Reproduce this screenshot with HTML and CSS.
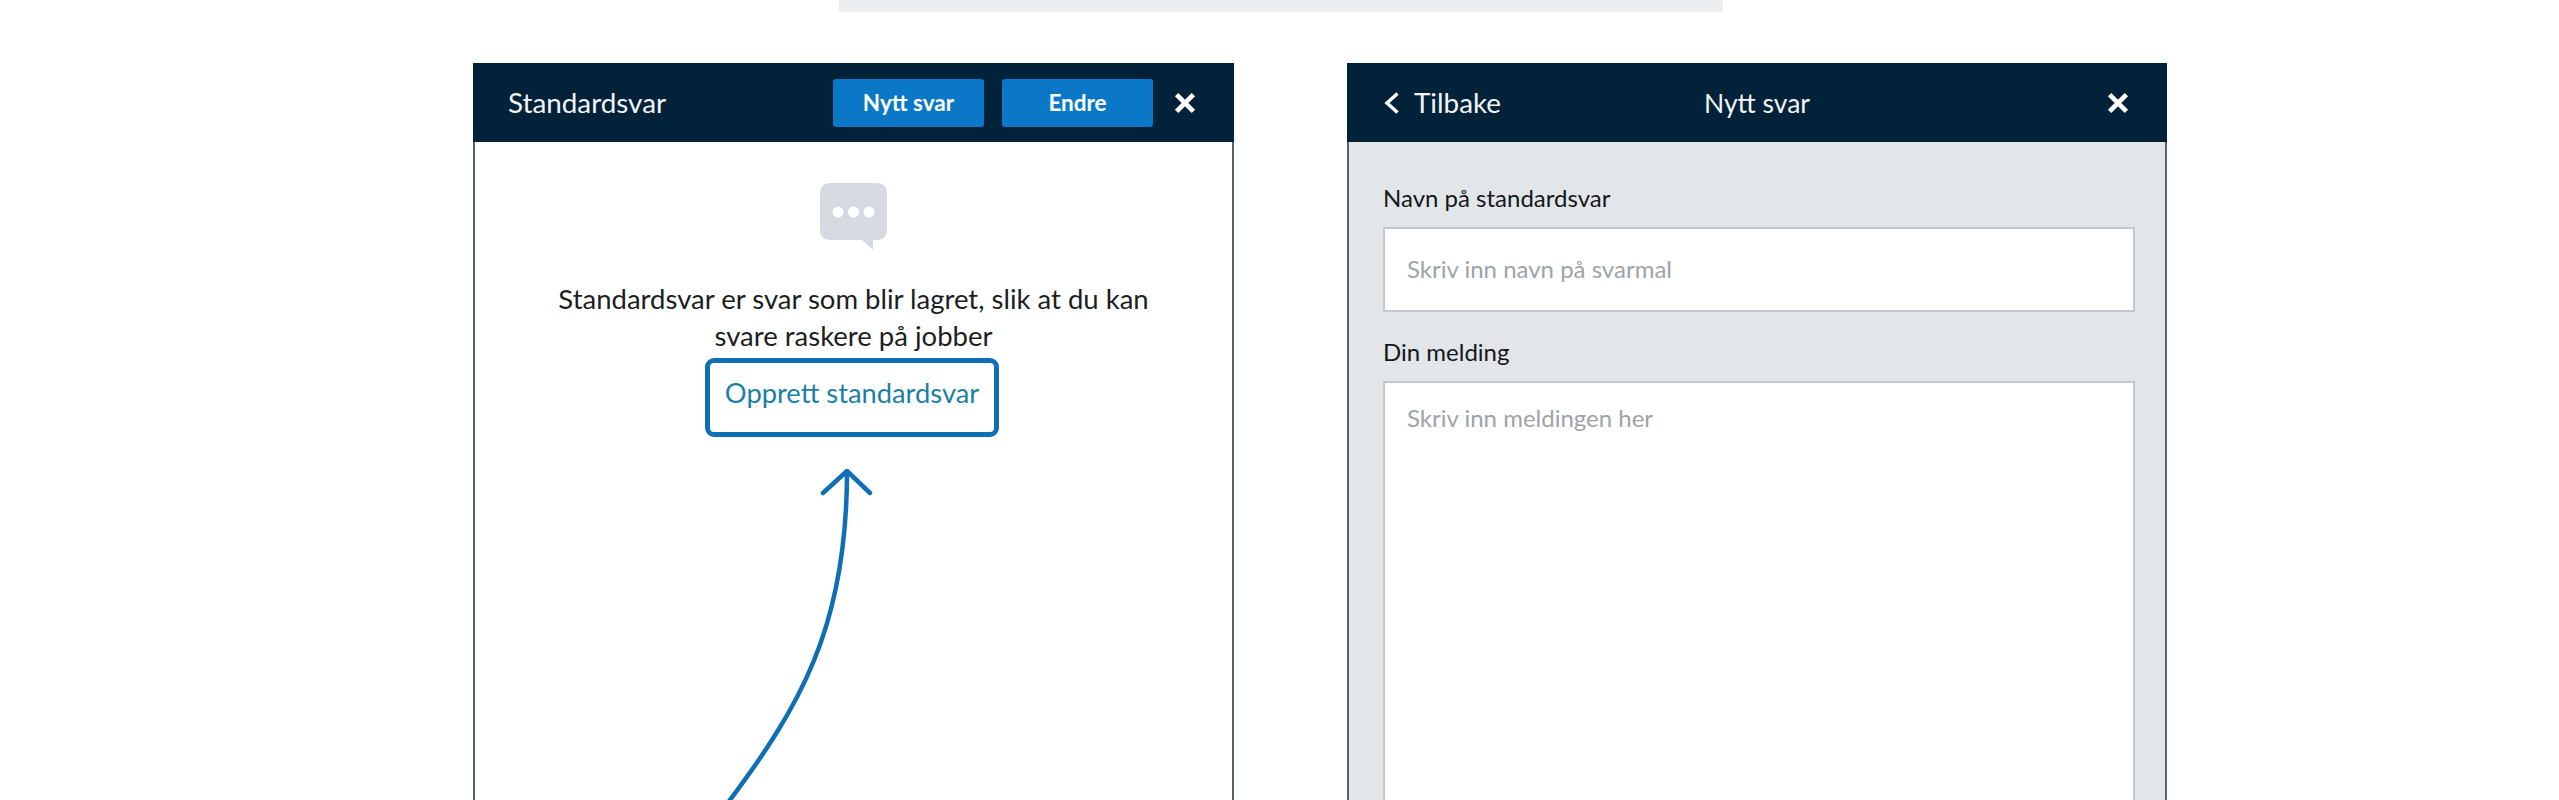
FILE: index.html
```html
<!DOCTYPE html>
<html lang="en">
<head>
  <meta charset="UTF-8" />
  <meta name="viewport" content="width=device-width, initial-scale=1.0"/>
  <title>Standardsvar</title>
  <link rel="stylesheet" href="styles.css">
</head>
<body>

  <div class="top-strip"></div>

  <div class="panels">

    <section class="panel panel-list">
      <header class="panel-header">
        <span class="header-title">Standardsvar</span>
        <div class="header-actions">
          <button class="header-button">Nytt svar</button>
          <button class="header-button">Endre</button>
          <svg class="close-icon" viewBox="0 0 20 20" aria-label="Lukk">
            <path d="M3 3 L17 17 M17 3 L3 17"/>
          </svg>
        </div>
      </header>

      <div class="panel-body empty-state">
        <svg class="bubble-icon" viewBox="0 0 67 67">
          <path class="bubble-shape" d="M11 0 H56 Q67 0 67 11 V46 Q67 57 56 57 H53 V67 L42 57 H11 Q0 57 0 46 V11 Q0 0 11 0 Z"/>
          <circle class="bubble-dot" cx="18" cy="29" r="5.5"/>
          <circle class="bubble-dot" cx="33.5" cy="29" r="5.5"/>
          <circle class="bubble-dot" cx="49" cy="29" r="5.5"/>
        </svg>
        <p class="empty-text">Standardsvar er svar som blir lagret, slik at du kan<br>svare raskere på jobber</p>
        <button class="create-button">Opprett standardsvar</button>
        <svg class="hint-arrow" viewBox="0 0 160 340">
          <path d="M2 336 C74 240 122 160 122 4 M98 25 L122 3 L145 25"/>
        </svg>
      </div>
    </section>

    <section class="panel panel-form">
      <header class="panel-header form-header">
        <div class="back-link">
          <svg class="back-icon" viewBox="0 0 15 22">
            <path d="M13.5 1.5 L3 11 L13.5 20.5"/>
          </svg>
          <span class="header-title">Tilbake</span>
        </div>
        <span class="header-title form-title">Nytt svar</span>
        <svg class="close-icon" viewBox="0 0 20 20" aria-label="Lukk">
          <path d="M3 3 L17 17 M17 3 L3 17"/>
        </svg>
      </header>

      <div class="panel-body form-body">
        <label class="field-label" for="reply-name">Navn på standardsvar</label>
        <input class="field-input" id="reply-name" type="text" placeholder="Skriv inn navn på svarmal">
        <label class="field-label" for="reply-message">Din melding</label>
        <textarea class="field-input field-message" id="reply-message" placeholder="Skriv inn meldingen her"></textarea>
      </div>
    </section>

  </div>

</body>
</html>
```

FILE: styles.css
```css
html, body {
  height: 800px;
  overflow: hidden;
}

body {
  margin: 0;
  background-color: #fff;
  font-family: Lato, "Open Sans", sans-serif;
  color: #1c1f22;
}

.top-strip {
  width: 884px;
  height: 12px;
  margin-left: 839px;
  background-color: #eceff1;
}

.panels {
  display: flex;
  align-items: flex-start;
  gap: 113px;
  margin-top: 51px;
  margin-left: 473px;
}

.panel {
  box-sizing: border-box;
  height: 737px;
  display: flex;
  flex-direction: column;
  border: 2px solid #56646f;
  border-top: none;
  border-bottom: none;
}

.panel-list {
  width: 761px;
}

.panel-form {
  width: 820px;
}

.panel-header {
  flex: none;
  height: 79px;
  margin: 0 -2px;
  padding: 0 35px;
  display: flex;
  align-items: center;
  justify-content: space-between;
  background-color: #02223a;
  color: #fff;
}

.header-title {
  font-size: 27.8px;
  color: #f2f4f5;
}

.header-actions {
  display: flex;
  align-items: center;
  gap: 18px;
  margin-right: 2px;
}

.header-button {
  width: 151px;
  height: 48px;
  border: none;
  border-radius: 3px;
  background-color: #0a78c6;
  color: #fff;
  font-family: inherit;
  font-size: 22.5px;
  font-weight: 700;
  cursor: pointer;
}

.close-icon {
  width: 24px;
  height: 24px;
  margin-left: 2px;
}

.close-icon path {
  fill: none;
  stroke: #fff;
  stroke-width: 4;
}

.panel-body {
  flex: 1;
}

.empty-state {
  display: flex;
  flex-direction: column;
  align-items: center;
  padding-top: 41px;
  overflow: hidden;
}

.bubble-icon {
  flex: none;
  width: 67px;
  height: 67px;
}

.bubble-shape {
  fill: #d5dae0;
}

.bubble-dot {
  fill: #fff;
}

.empty-text {
  margin: 30px 0 0;
  font-size: 27.5px;
  line-height: 37px;
  text-align: center;
}

.create-button {
  flex: none;
  width: 294px;
  height: 79px;
  margin-top: 4px;
  margin-right: 3px;
  padding: 0 0 11px;
  border: 5px solid #0f6fb5;
  border-radius: 9px;
  background-color: #fff;
  color: #1b7fa8;
  font-family: inherit;
  font-size: 27.3px;
  cursor: pointer;
}

.hint-arrow {
  align-self: flex-start;
  flex: none;
  width: 160px;
  height: 340px;
  margin-top: 31px;
  margin-left: 250px;
}

.hint-arrow path {
  fill: none;
  stroke: #0f6fb5;
  stroke-width: 4.5;
  stroke-linecap: round;
  stroke-linejoin: round;
}

.form-header {
  position: relative;
  padding: 0 37px 0 37px;
}

.back-link {
  display: flex;
  align-items: center;
  gap: 15px;
}

.back-icon {
  width: 15px;
  height: 22px;
}

.back-icon path {
  fill: none;
  stroke: #fff;
  stroke-width: 3.5;
}

.form-title {
  position: absolute;
  left: 0;
  right: 0;
  font-size: 26.5px;
  text-align: center;
  pointer-events: none;
}

.form-body {
  display: flex;
  flex-direction: column;
  padding: 40px 30px 0 34px;
  background-color: #e3e6e9;
  overflow: hidden;
}

.field-label {
  font-size: 24px;
  line-height: 32px;
  color: #14181b;
}

.field-input {
  box-sizing: border-box;
  flex: none;
  width: 752px;
  height: 85px;
  margin: 13px 0 24px;
  padding: 0 22px 3px;
  border: 2px solid #c3c8cc;
  border-radius: 0;
  background-color: #fff;
  font-family: inherit;
  font-size: 24px;
  outline: none;
}

.field-message {
  height: 500px;
  padding-top: 20px;
  resize: none;
}

.field-input::placeholder {
  color: #9ea3a7;
  opacity: 1;
}
```
